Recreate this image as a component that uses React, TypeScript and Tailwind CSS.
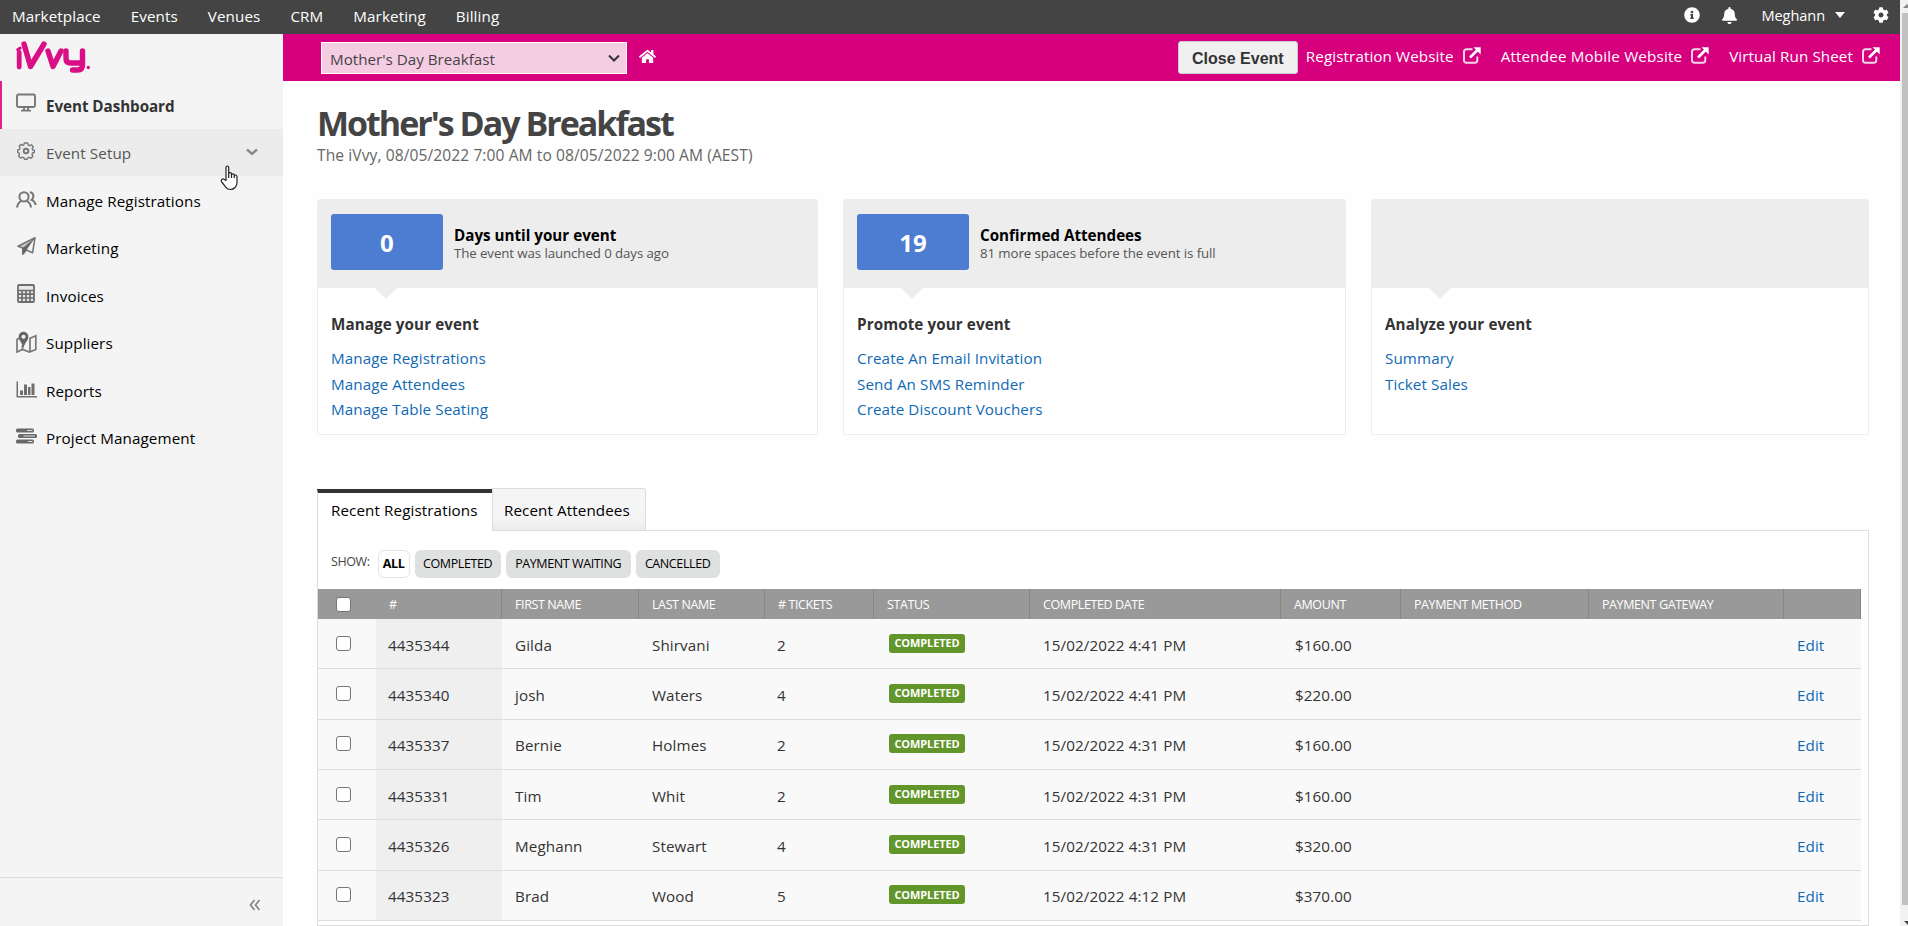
import type { ReactNode } from 'react';
import { FaBell, FaCog, FaHome, FaInfoCircle } from 'react-icons/fa';

const topNav = ['Marketplace', 'Events', 'Venues', 'CRM', 'Marketing', 'Billing'];

const MonitorIcon = () => (
  <svg width="20" height="20" viewBox="0 0 20 20" fill="none" stroke="#777" strokeWidth="1.9">
    <rect x="1" y="1.5" width="18" height="12.5" rx="1.5" />
    <path d="M8 14v3M12 14v3M5 17.6h10" />
  </svg>
);

const SetupIcon = () => (
  <svg width="18" height="18" viewBox="0 0 18 18" fill="none" stroke="#777" strokeWidth="1.4" strokeLinejoin="round">
    <path d="M7.4 1h3.2l.6 2 1.6.7 1.9-.9 1.5 2-1 1.8.4 1.3 1.8.6v1.8l-1.9.7-.5 1.4.9 1.8-2 2-1.9-.9-1.4.5-.7 1.6H7.6L7 15.8l-1.5-.6-1.9.9-1.9-1.9.8-1.9-.6-1.4L.7 10.3V8l1.7-.7.6-1.5-.8-1.8 1.7-1.6 1.9.9 1-.5z" />
    <circle cx="9" cy="9" r="2.3" strokeWidth="1.9" />
  </svg>
);

const PeopleIcon = () => (
  <svg className="mt-[3px]" width="21" height="18" viewBox="0 0 21 18" fill="none" stroke="#777" strokeWidth="2">
    <circle cx="8" cy="5.8" r="4.6" />
    <path d="M1 16.5c.5-3.2 2-5.400 4.300-6.400M10.700 10.100c2.400 1 3.900 3.200 4.400 6.400" />
    <path d="M13.800 1.300c3.600.2 5 4.800 1.800 7.600 2.300.8 3.500 2.300 4.200 5.200" />
  </svg>
);

const PlaneIcon = () => (
  <svg width="19" height="18" viewBox="0 0 19 18">
    <path d="M18 .8 15.5 15.8 9.5 13 5.8 17.2V11L1 9.2z" fill="none" stroke="#777" strokeWidth="1.6" strokeLinejoin="round" />
    <path d="M18 .8 5.5 11v6.2l4-4.2z" fill="#666" />
    <path d="M18 .8 5.5 11 1 9.2z" fill="#777" fillOpacity=".35" />
  </svg>
);

const CalculatorIcon = () => (
  <svg width="18" height="19" viewBox="0 0 18 19">
    <rect x="1" y="1" width="16" height="17" rx="1" fill="#e9e9e9" stroke="#706d6d" strokeWidth="1.8" />
    <path d="M1 6.5h16M1 10.2h16M1 14h16M5 6.5V18M9 6.5V18M13 6.5V18" stroke="#706d6d" strokeWidth="1.7" />
  </svg>
);

const MapIcon = () => (
  <svg className="mt-[3px]" width="21" height="22" viewBox="0 0 21 22">
    <path d="M4 7 1 8.3V21l5.500-2.500 7 2.500 6.300-2.500V4.800L14 7.300V21M6.500 14v4.500" fill="none" stroke="#777" strokeWidth="1.700" />
    <path d="M7.500.8a4.900 4.900 0 0 0-4.900 4.900c0 3.600 3.700 6.200 4.900 11 1.200-4.800 4.900-7.400 4.900-11A4.900 4.900 0 0 0 7.500.8m0 2.900a2 2 0 1 1 0 4.100 2 2 0 0 1 0-4.100" fill="#666" />
  </svg>
);

const ChartIcon = () => (
  <svg className="mt-[2px]" width="21" height="17" viewBox="0 0 21 17" fill="#706d6d">
    <path d="M.5.5H2V15h19v1.500H.5zM4 9.500h3V14H4zM8 3.500h3V14H8zM12 6h2.500v8H12zM15.500 2.500h3V14h-3z" />
  </svg>
);

const TasksIcon = () => (
  <svg width="21" height="16" viewBox="0 0 21 16">
    <rect x="0" y=".5" width="18" height="4" rx="1.5" fill="#6b6868" />
    <rect x="2" y="6" width="19" height="4" rx="1.5" fill="#6b6868" />
    <rect x="0" y="11.5" width="18" height="4" rx="1.5" fill="#6b6868" />
    <path d="M11 2.500h5.500M7.500 8H19M12 13.500h4.500" stroke="#ddd" strokeWidth="1.200" />
  </svg>
);

const LogoIcon = () => (
  <svg width="74" height="34" viewBox="0 0 74 34" fill="none" stroke="#da0f85" strokeWidth="5.4" strokeLinecap="round" strokeLinejoin="round">
    <path d="M3.200 12.500V27" strokeWidth="4.800" />
    <path d="M1.700 9.700 4.200 8" strokeWidth="3" />
    <path d="M8 4 14.500 26.500 28 4" />
    <path d="M32 11 37 26.500 45 11" />
    <path d="M50 11v7.500q0 4.500 4.500 4.500H65M66.500 11v14q0 5-5 5h-5" />
    <circle cx="72.300" cy="27.500" r="1.700" fill="#da0f85" stroke="none" />
  </svg>
);

const ExternalIcon = () => (
  <svg width="18" height="17" viewBox="0 0 18 17" fill="none" stroke="#fbd9ec" strokeWidth="1.9">
    <path d="M9.500 2.200H3.500Q1 2.200 1 4.700v8.600q0 2.500 2.500 2.500h8.300q2.500 0 2.500-2.500V9.500" />
    <path d="M7 10.500 14.500 3" stroke="#fff" strokeWidth="2.600" />
    <path d="M10.500.300h7.200v7.200z" fill="#fff" stroke="none" />
  </svg>
);

const HandCursor = () => (
  <svg width="20" height="26" viewBox="0 0 20 26" fill="#fff" stroke="#222" strokeWidth="1.2" strokeLinejoin="round">
    <path d="M6 15.500V2.500Q6 1 7.300 1T8.700 2.500V9q0-1.300 1.400-1.300T11.500 9v1q0-1.200 1.400-1.200t1.400 1.200v1q0-1 1.200-1t1.500 1.500v6q0 3-2 5t-4.500 2q-3 0-4.500-2.200L1.700 17Q.7 15.300 2 14.200q1.200-.8 2.300.2z" />
    <path d="M8.700 9v4M11.500 10v3M14.300 11v2" />
  </svg>
);

const menu: { label: string; icon: ReactNode; state?: 'active' | 'hover' }[] = [
  { label: 'Event Dashboard', icon: <MonitorIcon />, state: 'active' },
  { label: 'Event Setup', icon: <SetupIcon />, state: 'hover' },
  { label: 'Manage Registrations', icon: <PeopleIcon /> },
  { label: 'Marketing', icon: <PlaneIcon /> },
  { label: 'Invoices', icon: <CalculatorIcon /> },
  { label: 'Suppliers', icon: <MapIcon /> },
  { label: 'Reports', icon: <ChartIcon /> },
  { label: 'Project Management', icon: <TasksIcon /> },
];

const menuStyles = {
  active: 'border-l-2 border-[#e0218a] pl-3 font-bold tracking-[-0.05px] text-[#333]',
  hover: 'bg-[#ececec] pl-[14px] text-[#555]',
  idle: 'pl-[14px] text-black',
};

const cards = [
  {
    count: '0',
    title: 'Days until your event',
    note: 'The event was launched 0 days ago',
    heading: 'Manage your event',
    links: ['Manage Registrations', 'Manage Attendees', 'Manage Table Seating'],
  },
  {
    count: '19',
    title: 'Confirmed Attendees',
    note: '81 more spaces before the event is full',
    heading: 'Promote your event',
    links: ['Create An Email Invitation', 'Send An SMS Reminder', 'Create Discount Vouchers'],
  },
  { heading: 'Analyze your event', links: ['Summary', 'Ticket Sales'] },
];

const columns = ['#', 'First Name', 'Last Name', '# Tickets', 'Status', 'Completed Date', 'Amount', 'Payment Method', 'Payment Gateway', ''];

const rows = [
  { id: '4435344', first: 'Gilda', last: 'Shirvani', tickets: 2, date: '15/02/2022 4:41 PM', amount: '$160.00' },
  { id: '4435340', first: 'josh', last: 'Waters', tickets: 4, date: '15/02/2022 4:41 PM', amount: '$220.00' },
  { id: '4435337', first: 'Bernie', last: 'Holmes', tickets: 2, date: '15/02/2022 4:31 PM', amount: '$160.00' },
  { id: '4435331', first: 'Tim', last: 'Whit', tickets: 2, date: '15/02/2022 4:31 PM', amount: '$160.00' },
  { id: '4435326', first: 'Meghann', last: 'Stewart', tickets: 4, date: '15/02/2022 4:31 PM', amount: '$320.00' },
  { id: '4435323', first: 'Brad', last: 'Wood', tickets: 5, date: '15/02/2022 4:12 PM', amount: '$370.00' },
];

const gridCols = 'grid grid-cols-[58px_126px_137px_126px_109px_156px_251px_120px_188px_195px_77px]';

function Checkbox() {
  return <span className="block size-[15px] rounded-[3px] border border-[#767676] bg-white" />;
}

function TopBar() {
  return (
    <header className="flex h-[34px] shrink-0 items-center bg-[#444] pb-[2px] pl-3 pr-[11px] text-white">
      <nav className="flex gap-[30px]">
        {topNav.map((item) => (
          <a key={item}>{item}</a>
        ))}
      </nav>
      <div className="-mt-[2px] ml-auto flex items-center">
        <FaInfoCircle size={16} className="mr-[21px]" />
        <FaBell size={17} className="mr-[23px]" />
        <span className="text-[14.600px] tracking-[-0.100px]">Meghann</span>
        <span className="ml-2.5 mr-7 border-x-[5.500px] border-t-[6px] border-x-transparent border-t-white" />
        <FaCog size={16} />
      </div>
    </header>
  );
}

function Sidebar() {
  return (
    <aside className="flex w-[283px] shrink-0 flex-col bg-[#f4f4f4]">
      <div className="h-[47px] pl-4 pt-[6px]">
        <LogoIcon />
      </div>
      {menu.map(({ label, icon, state }) => (
        <div key={label} className={`relative flex h-[47.5px] shrink-0 items-center ${menuStyles[state ?? 'idle']}`}>
          <span className="flex w-6 justify-center pb-[3px]">{icon}</span>
          <span className="ml-2 pt-[2px]">{label}</span>
          {state === 'hover' && (
            <>
              <svg className="ml-auto mr-[25px]" width="12" height="8" viewBox="0 0 12 8" fill="none" stroke="#888" strokeWidth="2.4">
                <path d="M1 1.5 6 6l5-4.5" />
              </svg>
              <span className="absolute left-[220px] top-[36px] z-10">
                <HandCursor />
              </span>
            </>
          )}
        </div>
      ))}
      <div className="mt-auto flex h-[49px] items-center justify-end border-t border-[#ddd] pr-[22px] pt-[5px]">
        <svg width="12" height="12" viewBox="0 0 12 12" fill="none" stroke="#888" strokeWidth="1.8">
          <path d="M5.500 1 1.500 6l4 5M10.500 1l-4 5 4 5" />
        </svg>
      </div>
    </aside>
  );
}

function EventBar() {
  return (
    <div className="flex h-[47px] shrink-0 items-center bg-[#d6007e] pl-[38px] pr-5 text-white">
      <div className="flex h-8 w-[306px] items-center justify-between border border-white bg-[#f5cde3] pl-2 pr-[6px] text-[#444]">
        <span className="pt-[2px] tracking-normal">Mother's Day Breakfast</span>
        <svg width="12" height="8" viewBox="0 0 12 8" fill="none" stroke="#333" strokeWidth="2">
          <path d="M1 1.5 6 6.5l5-5" />
        </svg>
      </div>
      <FaHome size={17} className="ml-3 -mt-[3px]" />
      <button className="ml-auto h-[33px] w-[120px] rounded-[3px] border border-[#ccc] bg-[#f0f0f0] pt-[2px] font-[Liberation_Sans] text-base font-bold tracking-normal text-[#333]">
        Close Event
      </button>
      <a className="-mt-1 ml-2 flex items-center gap-[9px]">Registration Website <ExternalIcon /></a>
      <a className="-mt-1 ml-5 flex items-center gap-[9px] tracking-[0.170px]">Attendee Mobile Website <ExternalIcon /></a>
      <a className="-mt-1 ml-5 flex items-center gap-[9px]">Virtual Run Sheet <ExternalIcon /></a>
    </div>
  );
}

function Cards() {
  return (
    <div className="mt-[33px] grid grid-cols-[501px_503px_498px] gap-[25px]">
      {cards.map((card) => (
        <section key={card.heading} className="h-[236px] overflow-hidden rounded-[3px] border border-[#eee] bg-white">
          <div className="relative flex h-[88px] bg-[#ededed] pl-[13px] pt-[14px]">
            {card.count && (
              <>
                <div className="flex h-14 w-[112px] items-center justify-center rounded-[3px] bg-[#4c7dd1] pt-[2px] text-2xl font-bold text-white">
                  {card.count}
                </div>
                <div className="ml-[11px] pt-[11px]">
                  <h3 className="font-bold leading-[20px] tracking-normal text-black">{card.title}</h3>
                  <p className="text-[13.300px] leading-4 tracking-[-0.100px] text-[#555]">{card.note}</p>
                </div>
              </>
            )}
            <span className="absolute left-[57px] top-[88px] border-x-[11px] border-t-[11px] border-x-transparent border-t-[#ededed]" />
          </div>
          <div className="pl-[13px] pt-6">
            <h3 className="mb-[10px] font-bold leading-6 text-[#333]">{card.heading}</h3>
            {card.links.map((link) => (
              <a key={link} className="block leading-[25.500px] text-[#1069b5]">{link}</a>
            ))}
          </div>
        </section>
      ))}
    </div>
  );
}

function Filters() {
  return (
    <div className="flex h-[58px] items-center gap-[5px] pl-[13px] pt-[7px] text-[12.500px] tracking-[-0.4px] text-black">
      <span className="-mt-[3px] mr-[3px] text-[#444]">SHOW:</span>
      <span className="flex h-7 w-8 items-center justify-center rounded-md border border-[#e4e4e4] bg-white font-bold">ALL</span>
      <span className="flex h-7 w-[86px] items-center justify-center rounded-md bg-[#dfe1e0]">COMPLETED</span>
      <span className="flex h-7 w-[125px] items-center justify-center rounded-md bg-[#dfe1e0]">PAYMENT WAITING</span>
      <span className="flex h-7 w-[84px] items-center justify-center rounded-md bg-[#dfe1e0]">CANCELLED</span>
    </div>
  );
}

function RegistrationsTable() {
  return (
    <div className="w-[1543px] text-[#333]">
      <div className={`${gridCols} h-[30px] bg-[#999] text-[12.500px] uppercase tracking-[-0.4px] text-white`}>
        <div className="flex items-center pl-[18px]"><Checkbox /></div>
        {columns.map((col, i) => (
          <div key={i} className="flex items-center border-r border-[#888880] pl-[13px] pt-px">{col}</div>
        ))}
      </div>
      {rows.map((row) => (
        <div key={row.id} className={`${gridCols} h-[50.330px] items-stretch border-b border-[#ddd] bg-[#f9f9f9] *:flex *:items-center *:pl-[13px] *:pt-[2px]`}>
          <div className="pb-px pl-[18px]! pt-0!"><Checkbox /></div>
          <div className="bg-[#efefef] pl-[12px]!">{row.id}</div>
          <div>{row.first}</div>
          <div>{row.last}</div>
          <div className="pl-[12px]!">{row.tickets}</div>
          <div className="pb-px pl-[15px]! pt-0!">
            <span className="flex h-[19px] w-[76px] items-center justify-center rounded-[3px] bg-[#62962b] text-[11px] font-bold tracking-[-0.100px] text-white">
              COMPLETED
            </span>
          </div>
          <div>{row.date}</div>
          <div className="pl-[14px]!">{row.amount}</div>
          <div />
          <div />
          <div><a className="text-[#1069b5]">Edit</a></div>
        </div>
      ))}
    </div>
  );
}

export default function App() {
  return (
    <div className="flex h-[926px] w-[1908px] overflow-hidden bg-[#fefefe] font-[Open_Sans,sans-serif] text-[15.200px] leading-5 tracking-[0.100px]">
      <div className="flex w-[1900px] flex-col">
        <TopBar />
        <div className="flex min-h-0 flex-1">
          <Sidebar />
          <main className="flex min-w-0 flex-1 flex-col">
            <EventBar />
            <div className="pl-[34px] pr-[31px] pt-[21px]">
              <h1 className="text-[34px] font-bold leading-[42px] tracking-[-2px] text-[#444]">Mother's Day Breakfast</h1>
              <p className="mt-px text-[15.600px] leading-[21px] tracking-[0.080px] text-[#666]">The iVvy, 08/05/2022 7:00 AM to 08/05/2022 9:00 AM (AEST)</p>
              <Cards />
              <div className="mt-[53px] flex h-[43px]">
                <div className="z-10 mt-px h-[42px] w-[175px] border-l border-t-4 border-l-[#ddd] border-t-[#333] bg-white pl-[13px] pt-[7px] text-black">
                  Recent Registrations
                </div>
                <div className="h-[42px] w-[154px] rounded-tr-[3px] border border-b-0 border-[#ddd] bg-linear-to-b from-[#f5f5f5] from-70% to-[#ebebeb] pl-[11px] pt-[11px] text-black">
                  Recent Attendees
                </div>
              </div>
              <div className="-mt-px h-[396px] border border-[#ddd] bg-white">
                <Filters />
                <RegistrationsTable />
              </div>
            </div>
          </main>
        </div>
      </div>
      <div className="relative w-2 bg-[#f1f1f1] pl-[2px] pt-[13px]">
        <div className="h-[892px] bg-[#c1c1c1]" />
        <span className="absolute left-[3px] top-[4px] border-x-4 border-b-4 border-x-transparent border-b-[#888]" />
        <span className="absolute left-[4px] top-[921px] border-x-4 border-t-4 border-x-transparent border-t-[#444]" />
      </div>
    </div>
  );
}
